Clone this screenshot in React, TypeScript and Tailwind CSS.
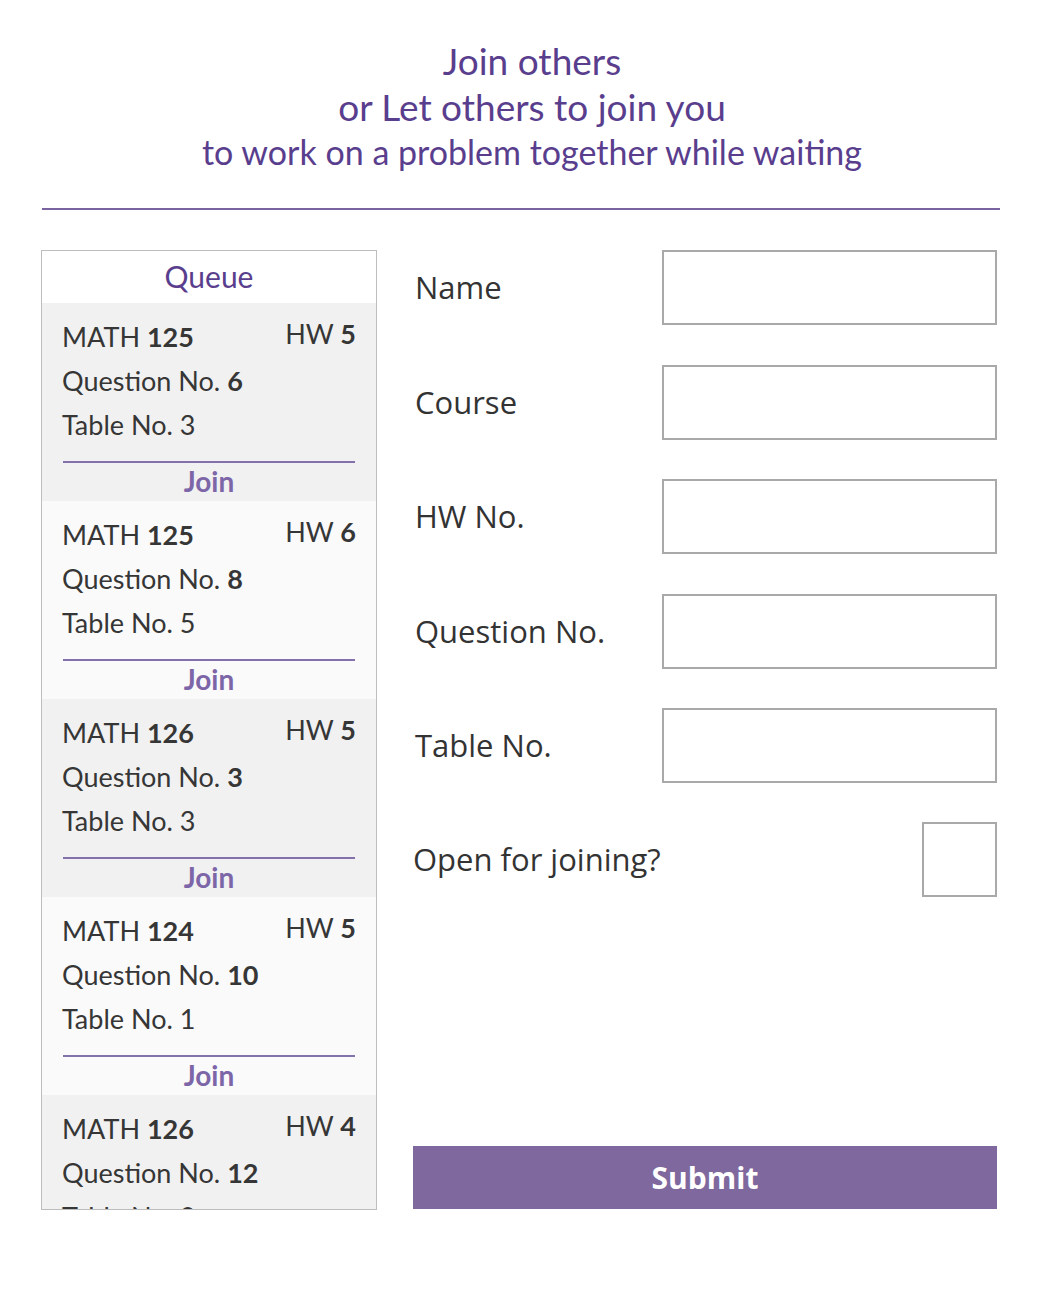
import React from 'react';

const queue = [
  { course: '125', hw: '5', question: '6', table: '3' },
  { course: '125', hw: '6', question: '8', table: '5' },
  { course: '126', hw: '5', question: '3', table: '3' },
  { course: '124', hw: '5', question: '10', table: '1' },
  { course: '126', hw: '4', question: '12', table: '2' },
];

const fields = ['Name', 'Course', 'HW No.', 'Question No.', 'Table No.'];

const QueueItem = ({ item, index }: { item: (typeof queue)[number]; index: number }) => (
  <div
    className={`h-[198px] shrink-0 px-[20px] pt-[12px] text-[#363636] ${
      index % 2 === 0 ? 'bg-[#f1f1f1]' : 'bg-[#fafafa]'
    }`}
  >
    <div className="flex items-start justify-between text-[27px] leading-[44px]">
      <span>
        MATH <b className="font-bold">{item.course}</b>
      </span>
      <span className="-mt-[3px]">
        HW <b className="font-bold">{item.hw}</b>
      </span>
    </div>
    <div className="text-[27px] leading-[44px]">
      Question No. <b className="font-bold">{item.question}</b>
    </div>
    <div className="text-[27px] leading-[44px]">Table No. {item.table}</div>
    <div className="mx-[1px] mt-[14px] h-[2px] bg-[#8371ab]" />
    <div className="text-center text-[28px] leading-[36px] font-bold text-[#7d66a8]">Join</div>
  </div>
);

export default function App() {
  return (
    <div className="w-[1042px] h-[1293px] bg-white font-['Lato',sans-serif]">
      <div className="pl-[22px] pt-[38px] text-center text-[#5a3e8e]">
        <div className="text-[37px] leading-[46px]">Join others</div>
        <div className="text-[37px] leading-[46px]">or Let others to join you</div>
        <div className="text-[34px] leading-[44px]">to work on a problem together while waiting</div>
      </div>
      <div className="mx-[42px] mt-[34px] h-[2px] bg-[#7a64a0]" />

      <div className="mt-[40px] flex px-[41px]">
        <div className="flex h-[960px] w-[336px] flex-col overflow-hidden border border-[#bdbdbd]">
          <div className="h-[52px] shrink-0 bg-white text-center text-[30px] leading-[50px] text-[#5a3e8e]">
            Queue
          </div>
          {queue.map((item, i) => (
            <QueueItem key={i} item={item} index={i} />
          ))}
        </div>

        <div className="ml-[36px] flex w-[584px] flex-col font-['Open_Sans',sans-serif] text-[#333]">
          {fields.map((label) => (
            <div key={label} className="mb-[39.5px] flex h-[75px] items-center justify-between">
              <span className="ml-[2px] text-[31px]">{label}</span>
              <input
                type="text"
                className="h-[75px] w-[335px] border-2 border-[#a9a9a9] bg-white outline-none"
              />
            </div>
          ))}
          <div className="-mt-[1px] flex h-[75px] items-center justify-between">
            <span className="text-[31px]">Open for joining?</span>
            <div className="h-[75px] w-[75px] border-2 border-[#a9a9a9]" />
          </div>
          <button className="mt-[249px] h-[63px] w-[584px] bg-[#7e689e] text-[30px] font-bold text-white">
            Submit
          </button>
        </div>
      </div>
    </div>
  );
}
